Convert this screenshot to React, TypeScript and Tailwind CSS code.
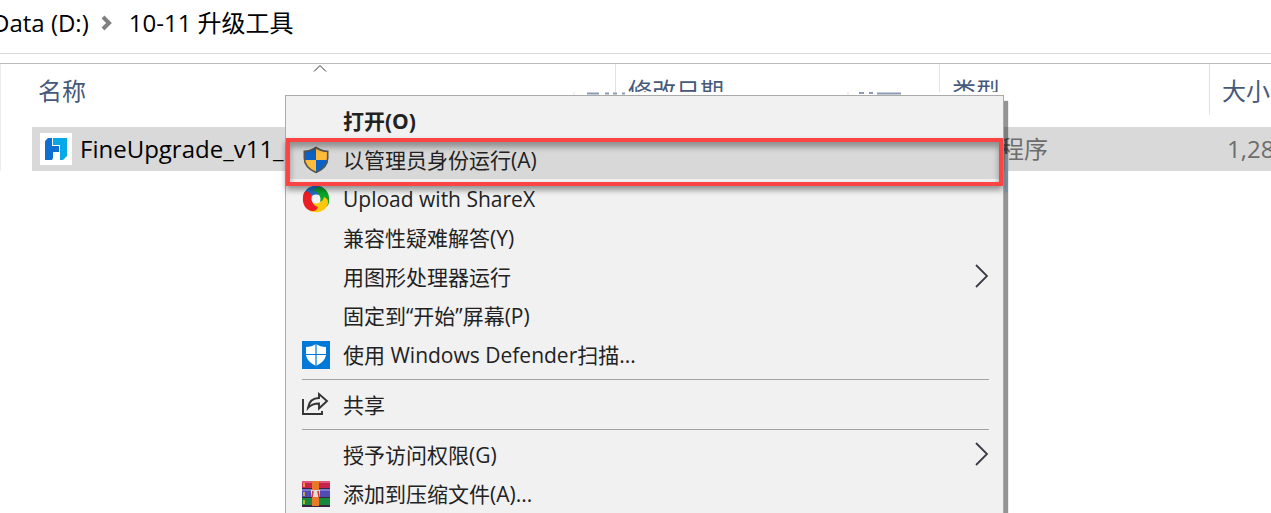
import type { ReactNode } from "react";

type MenuEntry = {
  label: string;
  icon?: ReactNode;
  bold?: boolean;
  submenu?: boolean;
  highlighted?: boolean;
};

function UacShieldIcon() {
  return (
    <svg viewBox="0 0 28 28" className="h-7 w-7" aria-hidden="true">
      <defs>
        <clipPath id="uac">
          <path d="M14 1C10 4 6 5 2 5v7c0 7 5 12 12 15 7-3 12-8 12-15V5c-4 0-8-1-12-4z" />
        </clipPath>
      </defs>
      <g clipPath="url(#uac)">
        <path d="M0 0h14v14H0z" fill="#0b62c4" />
        <path d="M14 0h14v14H14z" fill="#fdbb3b" />
        <path d="M0 14h14v14H0z" fill="#fdbb3b" />
        <path d="M14 14h14v14H14z" fill="#0b62c4" />
      </g>
      <path
        d="M14 1.500C10 4.300 6 5.300 2.300 5.300V12c0 6.800 4.700 11.500 11.700 14.500 7-3 11.700-7.700 11.700-14.500V5.300c-3.700 0-7.700-1-11.700-3.800z"
        fill="none"
        stroke="#555"
        strokeWidth="1.600"
      />
    </svg>
  );
}

function ShareXIcon() {
  const blade = "M2 11C2 4 9 0 16 1c3 0 5 1 6 3-1 4-4 6-8 6-4 0-7 2-8 6-3-1-4-3-4-5z";
  return (
    <svg viewBox="0 0 28 28" className="h-7 w-7" aria-hidden="true">
      <path d={blade} fill="#2472c8" />
      <path d={blade} fill="#0ba52c" transform="rotate(90 14 14)" />
      <path d={blade} fill="#fdc70c" transform="rotate(180 14 14)" />
      <path d={blade} fill="#ee1c25" transform="rotate(270 14 14)" />
      <circle cx="14" cy="14" r="4.500" fill="#f4f4f4" />
    </svg>
  );
}

function DefenderIcon() {
  return (
    <svg viewBox="0 0 28 28" className="h-7 w-7" aria-hidden="true">
      <path d="M0 0h28v28H0z" fill="#0078d7" />
      <path d="M14 3c-3 2-6 3-10 3v7c0 5 4 9 10 12 6-3 10-7 10-12V6c-4 0-7-1-10-3z" fill="#fff" />
      <path d="M14 3v22M4 13.500h20" stroke="#0078d7" strokeWidth="1.200" />
    </svg>
  );
}

function ShareIcon() {
  return (
    <svg
      viewBox="0 0 28 28"
      className="h-7 w-7"
      fill="none"
      stroke="#333"
      strokeWidth="1.900"
      aria-hidden="true"
    >
      <path d="M1 8v15h19v-3" />
      <path d="M6 17c1-6 4-10 11-10V3l8 7-8 7.500v-5c-5 0-8 1-11 4.500z" />
    </svg>
  );
}

function WinRarIcon() {
  return (
    <svg viewBox="0 0 28 28" className="h-7 w-7" aria-hidden="true">
      <path d="M0 1h28v8H0z" fill="#c8234f" />
      <path d="M0 1h28v2H0z" fill="#e0557a" />
      <path d="M0 9h28v9H0z" fill="#4f4db5" />
      <path d="M0 9h28v2H0z" fill="#7b78d0" />
      <path d="M0 18h28v8H0z" fill="#168a3a" />
      <path d="M0 8h28v1H0zM0 17h28v1H0zM0 25h28v2H0z" fill="#3a2440" />
      <path d="M2 3v4M2 12v4M2 20v4" stroke="#f2c230" strokeWidth="1.500" />
      <path d="M10 1h7v25h-7z" fill="#e8792b" />
      <path d="M9 10h9v7H9z" fill="#e3dede" />
      <path d="M10 17l1-6M17 17l-1-6" stroke="#d8362e" strokeWidth="1.600" />
    </svg>
  );
}

function FineUpgradeIcon() {
  return (
    <svg viewBox="0 0 32 32" className="h-8 w-8 shrink-0 bg-white" aria-hidden="true">
      <path d="M8 5h4v8h7v6h-6v6l-1 2H5V8z" fill="#0f6fd0" />
      <path d="M13 5h14v18l-4 4h-3V12h-7z" fill="#06a8e6" />
    </svg>
  );
}

const menuGroups: MenuEntry[][] = [
  [
    { label: "打开(O)", bold: true },
    { label: "以管理员身份运行(A)", icon: <UacShieldIcon />, highlighted: true },
    { label: "Upload with ShareX", icon: <ShareXIcon /> },
    { label: "兼容性疑难解答(Y)" },
    { label: "用图形处理器运行", submenu: true },
    { label: "固定到“开始”屏幕(P)" },
    { label: "使用 Windows Defender扫描...", icon: <DefenderIcon /> },
  ],
  [{ label: "共享", icon: <ShareIcon /> }],
  [
    { label: "授予访问权限(G)", submenu: true },
    { label: "添加到压缩文件(A)...", icon: <WinRarIcon /> },
  ],
];

function MenuItem({ entry }: { entry: MenuEntry }) {
  return (
    <button
      type="button"
      role="menuitem"
      className={`relative flex h-[39px] w-full items-center pr-[14px] pl-4 text-left text-[21px] whitespace-nowrap text-[#222] ${
        entry.bold ? "font-bold" : ""
      } ${entry.highlighted ? "bg-[#d8d8d8]" : ""}`}
    >
      <span className="flex w-[41px] shrink-0">{entry.icon}</span>
      <span className="grow">{entry.label}</span>
      {entry.submenu && (
        <svg viewBox="0 0 16 26" className="h-[26px] w-4" fill="none" aria-hidden="true">
          <path d="M3 1l11 11L3 23" stroke="#3b3b48" strokeWidth="1.800" />
        </svg>
      )}
      {/* red marker round the entry to click */}
      {entry.highlighted && (
        <span className="pointer-events-none absolute -top-[2px] right-0 -bottom-[7px] left-0 z-10 border-4 border-[#fb4444] shadow-[0_4px_6px_rgba(0,0,0,0.4),inset_0_5px_6px_rgba(0,0,0,0.35)]" />
      )}
    </button>
  );
}

function ContextMenu() {
  return (
    <div className="absolute top-[92px] left-[285px] w-[719px]">
      {/* sliver of the header row left above the menu */}
      <svg viewBox="0 0 719 3" className="block h-[3px] w-full bg-white" aria-hidden="true">
        <path d="M289 0v3M563 0v3" stroke="#e2e2e2" />
        <path
          d="M302 1.500h12M320 1.500h4M328 1.500h4M337 1.500h3M574 1h5M584 1h4M592 1.500h24"
          stroke="#8c9ab4"
          strokeWidth="2"
        />
      </svg>
      <div
        role="menu"
        className="border border-[#aaa] bg-[#f1f1f1] pt-[5px] pb-4 shadow-[4px_6px_1px_rgba(0,0,0,0.42)]"
      >
        {menuGroups.map((group, index) => (
          <div key={index}>
            {index > 0 && (
              <div className="flex h-[11px] items-center pr-[14px] pl-4">
                <hr className="w-full border-[#a2a2a2]" />
              </div>
            )}
            {group.map((entry) => (
              <MenuItem key={entry.label} entry={entry} />
            ))}
          </div>
        ))}
      </div>
      <div className="absolute top-[62px] -right-[4px] h-[38px] w-[3px] bg-[#7892a8]" />
    </div>
  );
}

function ColumnHeader({ title }: { title: string }) {
  return (
    <th className="p-0 pb-3 text-left font-normal text-[#47597a]">
      <div className="flex h-[51px] items-center border-r border-[#e2e2e2] pt-[2px] pl-3">
        {title}
      </div>
    </th>
  );
}

export default function App() {
  return (
    <div className="relative h-screen overflow-hidden bg-white font-['Open_Sans','Noto_Sans_CJK_SC',sans-serif] text-2xl text-black">
      <nav className="flex h-[54px] items-center border-b border-[#d9d9d9] pb-2 whitespace-nowrap">
        <a href="#drive" className="-ml-2">
          Data (D:)
        </a>
        <svg viewBox="0 0 12 16" className="mr-4 ml-3 h-4 w-3" fill="none" aria-hidden="true">
          <path d="M2 2l6 6-6 6" stroke="#808080" strokeWidth="4" />
        </svg>
        <a href="#folder">10-11 升级工具</a>
      </nav>

      <main className="mt-[9px] border-t border-[#bcbcbc]">
        <div className="border-l border-[#ececec] pl-[31px]">
          <table className="w-full min-w-[1239px] table-fixed border-collapse whitespace-nowrap">
            <colgroup>
              <col className="w-[584px]" />
              <col className="w-[324px]" />
              <col className="w-[270px]" />
              <col />
            </colgroup>
            <thead>
              <tr>
                <th className="p-0 pb-3 text-left font-normal text-[#47597a]">
                  <div className="relative flex h-[51px] items-center border-r border-[#e2e2e2] pt-[2px] pl-[6px]">
                    名称
                    <svg
                      viewBox="0 0 14 8"
                      className="absolute top-0 left-[281px] h-2 w-[14px]"
                      fill="none"
                      aria-hidden="true"
                    >
                      <path d="M1 7.500l6-6 6 6" stroke="#333" />
                    </svg>
                  </div>
                </th>
                <ColumnHeader title="修改日期" />
                <ColumnHeader title="类型" />
                <th className="p-0 pb-3 text-left font-normal text-[#47597a]">
                  <div className="flex h-[51px] items-center pt-[2px] pl-3">大小</div>
                </th>
              </tr>
            </thead>
            <tbody>
              <tr className="h-11 bg-[#d9d9d9]">
                <td className="p-0">
                  <div className="flex items-center gap-2 pl-2">
                    <FineUpgradeIcon />
                    FineUpgrade_v11_
                  </div>
                </td>
                <td className="p-0" />
                <td className="p-0 pl-3 text-[#6d6d6d]">应用程序</td>
                <td className="overflow-hidden p-0 pl-[17px] text-[#6d6d6d]">1,28</td>
              </tr>
            </tbody>
          </table>
        </div>
      </main>

      <ContextMenu />
    </div>
  );
}
